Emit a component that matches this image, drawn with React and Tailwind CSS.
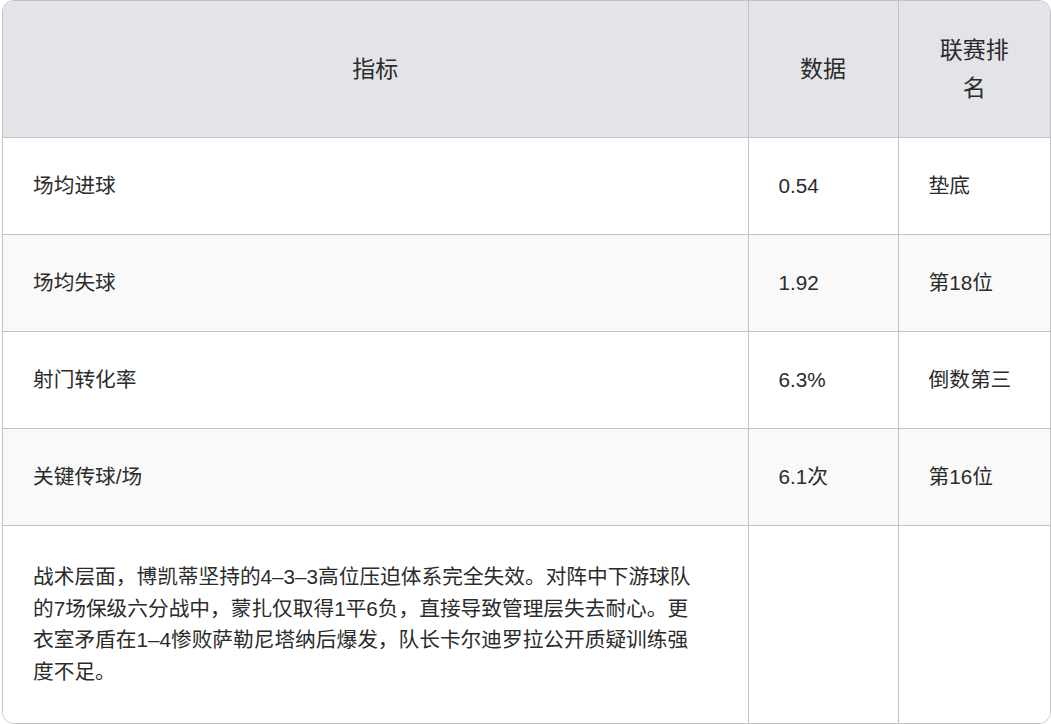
import React from "react";

const rows = [
  { name: "场均进球", value: "0.54", rank: "垫底" },
  { name: "场均失球", value: "1.92", rank: "第18位" },
  { name: "射门转化率", value: "6.3%", rank: "倒数第三" },
  { name: "关键传球/场", value: "6.1次", rank: "第16位" },
];

const font = { fontFamily: '"Liberation Sans", "Noto Sans CJK SC", sans-serif' };

const App = () => {
  return (
    <div className="w-[1051px] h-[724px] bg-white pl-[2px]" style={font}>
      <div className="w-[1049px] rounded-[12px] border border-[#c0c2c6] overflow-hidden h-[724px]">
        <table className="w-full h-full border-collapse table-fixed text-[#2b2b2b]">
          <colgroup>
            <col />
            <col className="w-[150px]" />
            <col className="w-[152px]" />
          </colgroup>
          <thead>
            <tr className="bg-[#e2e4e8] h-[136px]">
              <th className="font-normal text-[23px] leading-[38px] px-[30px] text-center">指标</th>
              <th className="font-normal text-[23px] leading-[38px] px-[30px] text-center border-l border-[#c0c2c6]">数据</th>
              <th className="font-normal text-[23px] leading-[38px] px-[30px] text-center border-l border-[#c0c2c6]">联赛排名</th>
            </tr>
          </thead>
          <tbody className="text-[20.7px] leading-[31px]">
            {rows.map((row, i) => (
              <tr key={row.name} className={`h-[97px] border-t border-[#c0c2c6] ${i % 2 === 1 ? "bg-[#f9f9f9]" : "bg-white"}`}>
                <td className="px-[30px]">{row.name}</td>
                <td className="px-[30px] border-l border-[#c0c2c6]">{row.value}</td>
                <td className="px-[30px] border-l border-[#c0c2c6]">{row.rank}</td>
              </tr>
            ))}
            <tr className="border-t border-[#c0c2c6] bg-white">
              <td className="px-[30px] py-[35px] leading-[31.5px]">
                战术层面，博凯蒂坚持的4–3–3高位压迫体系完全失效。对阵中下游球队
                <br />
                的7场保级六分战中，蒙扎仅取得1平6负，直接导致管理层失去耐心。更
                <br />
                衣室矛盾在1–4惨败萨勒尼塔纳后爆发，队长卡尔迪罗拉公开质疑训练强
                <br />
                度不足。
              </td>
              <td className="border-l border-[#c0c2c6]"></td>
              <td className="border-l border-[#c0c2c6]"></td>
            </tr>
          </tbody>
        </table>
      </div>
    </div>
  );
};

export default App;
